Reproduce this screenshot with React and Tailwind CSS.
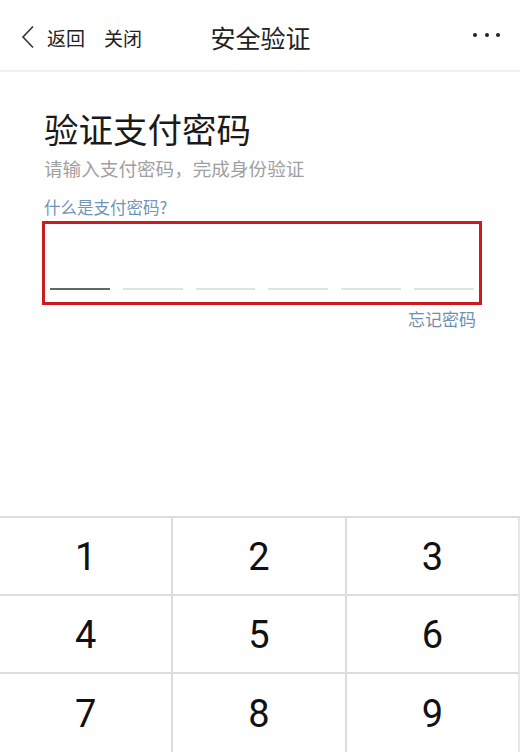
import React from "react";

const cjk = { fontFamily: '"Noto Sans CJK SC", "Noto Sans", sans-serif' };
const digitFont = { fontFamily: 'Roboto, "Noto Sans", sans-serif' };

export default function App() {
  const keys = ["1", "2", "3", "4", "5", "6", "7", "8", "9"];
  return (
    <div className="w-[520px] h-[752px] bg-white overflow-hidden flex flex-col" style={cjk}>
      {/* Header */}
      <div className="h-[72px] shrink-0 flex items-center border-b-2 border-[#f0f0f0] pt-[4px]">
        <div className="flex-1 flex items-center pl-[21px]">
          <svg width="14" height="24" viewBox="0 0 14 24" className="mr-[12px]">
            <path d="M12 1.5 L2 12 L12 22.5" fill="none" stroke="#333" strokeWidth="1.6" />
          </svg>
          <span className="text-[19px] leading-none text-[#222]">返回</span>
          <span className="text-[19px] leading-none text-[#222] ml-[19px]">关闭</span>
        </div>
        <div className="text-[25px] leading-none text-[#222]">安全验证</div>
        <div className="flex-1 flex items-center justify-end pr-[20px] gap-[7.5px] -mt-[4px]">
          <span className="w-[4px] h-[4px] rounded-full bg-[#222]" />
          <span className="w-[4px] h-[4px] rounded-full bg-[#222]" />
          <span className="w-[4px] h-[4px] rounded-full bg-[#222]" />
        </div>
      </div>

      {/* Content */}
      <div className="flex-1 pl-[42px] pr-[38px]">
        <div className="mt-[36px] pl-[2px] text-[34.5px] leading-[40px] text-[#1a1a1a]">验证支付密码</div>
        <div className="mt-[9px] pl-[2px] text-[18.6px] leading-[22px] text-[#a0a0a0]">请输入支付密码，完成身份验证</div>
        <div className="mt-[18px] pl-[2px] text-[16.5px] leading-[21px] text-[#6f94b8]">什么是支付密码?</div>
        <div className="mt-[3px] h-[84px] border-[3.5px] border-[#cc1a1f] flex items-end px-[5px] pb-[12px] gap-[13px]">
          <div className="flex-1 h-[2px] bg-[#666]" />
          <div className="flex-1 h-[2px] bg-[#e2e2e2]" />
          <div className="flex-1 h-[2px] bg-[#e2e2e2]" />
          <div className="flex-1 h-[2px] bg-[#e2e2e2]" />
          <div className="flex-1 h-[2px] bg-[#e2e2e2]" />
          <div className="flex-1 h-[2px] bg-[#e2e2e2]" />
        </div>
        <div className="mt-[3px] flex justify-end pr-[6px]">
          <span className="text-[17px] leading-[22px] text-[#6f8fae]">忘记密码</span>
        </div>
      </div>

      {/* Keypad */}
      <div className="shrink-0 grid grid-cols-3 border-t-2 border-[#dcdcdc]" style={digitFont}>
        {keys.map((k, i) => (
          <div
            key={k}
            className={
              "h-[78px] flex items-center justify-center pt-[3px] text-[38px] text-[#111] " +
              (i % 3 !== 2 ? "border-r-2 border-[#dcdcdc] " : "border-r-2 border-[#e6e6e6] ") +
              (i < 6 ? "border-b-2 border-b-[#dcdcdc]" : "")
            }
          >
            {k}
          </div>
        ))}
      </div>
    </div>
  );
}
